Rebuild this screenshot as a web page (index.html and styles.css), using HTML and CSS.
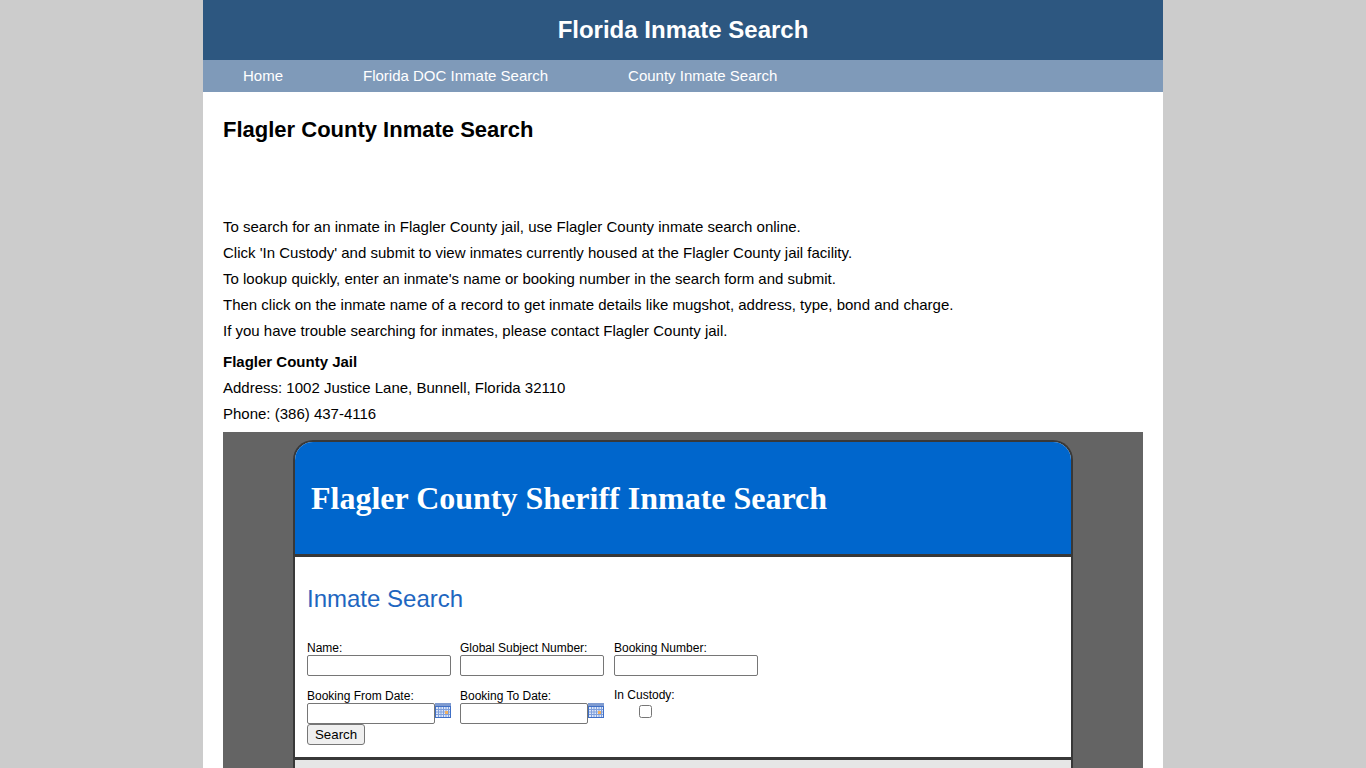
FILE: index.html
```html
<!DOCTYPE html>
<html lang="en">

<head>
    <meta charset="UTF-8" />
    <title>Flagler County Inmate Search</title>
    <link rel="stylesheet" href="styles.css">
</head>

<body>
    <div class="wrapper">
        <header class="site-title">Florida Inmate Search</header>
        <nav class="site-nav">
            <a href="#">Home</a>
            <a href="#">Florida DOC Inmate Search</a>
            <a href="#">County Inmate Search</a>
        </nav>
        <div class="content">
            <h1>Flagler County Inmate Search</h1>
            <div class="intro">
                <p>To search for an inmate in Flagler County jail, use Flagler County inmate search online.</p>
                <p>Click 'In Custody' and submit to view inmates currently housed at the Flagler County jail facility.</p>
                <p>To lookup quickly, enter an inmate's name or booking number in the search form and submit.</p>
                <p>Then click on the inmate name of a record to get inmate details like mugshot, address, type, bond and charge.</p>
                <p>If you have trouble searching for inmates, please contact Flagler County jail.</p>
            </div>
            <div class="jail-info">
                <p><b>Flagler County Jail</b></p>
                <p>Address: 1002 Justice Lane, Bunnell, Florida 32110</p>
                <p>Phone: (386) 437-4116</p>
            </div>
            <div class="frame">
                <div class="card">
                    <div class="card-head">Flagler County Sheriff Inmate Search</div>
                    <div class="card-body">
                        <h2>Inmate Search</h2>
                        <form class="search-form">
                            <div class="form-row">
                                <label class="field">Name:<input type="text" class="box"></label>
                                <label class="field">Global Subject Number:<input type="text" class="box"></label>
                                <label class="field">Booking Number:<input type="text" class="box"></label>
                            </div>
                            <div class="form-row">
                                <label class="field">Booking From Date:
                                    <span class="date-line">
                                        <input type="text" class="box box-date">
                                        <svg class="cal" viewBox="0 0 16 15"><use href="#cal-icon" /></svg>
                                    </span>
                                </label>
                                <label class="field">Booking To Date:
                                    <span class="date-line">
                                        <input type="text" class="box box-date">
                                        <svg class="cal" viewBox="0 0 16 15"><use href="#cal-icon" /></svg>
                                    </span>
                                </label>
                                <label class="field field-check">In Custody:<input type="checkbox" class="check"></label>
                            </div>
                            <button type="button" class="search-btn">Search</button>
                        </form>
                    </div>
                    <div class="card-foot"></div>
                </div>
            </div>
        </div>
    </div>

    <svg class="defs" width="0" height="0">
        <defs>
            <g id="cal-icon">
                <rect x="0" y="0" width="16" height="15" fill="#3f6fc6" />
                <rect x="0" y="0" width="16" height="3" fill="#7f9bd0" />
                <rect x="1" y="4" width="14" height="10" fill="#dfe8f8" />
                <path d="M1 6.5h14M1 9h14M1 11.5h14M3.5 4v10M6 4v10M8.5 4v10M11 4v10M13.5 4v10" stroke="#7f9fdc" stroke-width="1" />
                <rect x="10" y="8" width="3" height="3" fill="#f0b060" />
            </g>
        </defs>
    </svg>
</body>

</html>
```

FILE: styles.css
```css
:root {
    --page-bg: #cccccc;
    --title-bg: #2d5780;
    --nav-bg: #7f9ab9;
    --frame-bg: #646464;
    --card-line: #383838;
    --card-blue: #0066cc;
}

html,
body {
    margin: 0;
    padding: 0;
    height: 768px;
    overflow: hidden;
}

body {
    background-color: var(--page-bg);
    font-family: "Liberation Sans", Arial, sans-serif;
    color: #000;
}

.wrapper {
    width: 960px;
    margin-left: 203px;
    background: #fff;
}

.site-title {
    height: 60px;
    line-height: 60px;
    background-color: var(--title-bg);
    color: #fff;
    font-size: 24px;
    font-weight: bold;
    text-align: center;
}

.site-nav {
    height: 30px;
    display: flex;
    gap: 80px;
    padding: 0 0 2px 40px;
    align-items: center;
    background-color: var(--nav-bg);
}

.site-nav a {
    color: #fff;
    font-size: 15px;
    text-decoration: none;
}

.content {
    padding: 0 20px;
}

h1 {
    margin: 0;
    padding-top: 24px;
    height: 122px;
    box-sizing: border-box;
    font-size: 22px;
    line-height: 27px;
}

.content p {
    margin: 0;
    font-size: 15px;
    line-height: 26px;
    height: 26px;
}

.intro {
    margin-bottom: 5px;
}

.jail-info {
    margin-bottom: 5px;
}

.frame {
    background-color: var(--frame-bg);
    padding: 8px 70px 0;
}

.card {
    border: 2px solid var(--card-line);
    border-bottom: none;
    border-radius: 20px 20px 0 0;
    background: #fff;
    overflow: hidden;
}

.card-head {
    height: 112px;
    line-height: 113px;
    padding-left: 16px;
    background-color: var(--card-blue);
    color: #fff;
    font-family: "Liberation Serif", "Times New Roman", serif;
    font-size: 32px;
    font-weight: bold;
    border-bottom: 3px solid var(--card-line);
}

.card-body {
    padding: 0 12px 12px;
}

h2 {
    margin: 0;
    padding-top: 28px;
    height: 83px;
    box-sizing: border-box;
    font-size: 24px;
    font-weight: normal;
    line-height: 28px;
    color: #1e66c0;
}

.form-row {
    display: grid;
    grid-template-columns: 153px 154px 144px;
    margin-bottom: 12px;
}

.form-row:nth-child(2) {
    margin-bottom: 0;
}

.field {
    display: flex;
    flex-direction: column;
    font-size: 12px;
    line-height: 16px;
}

.box {
    width: 144px;
    height: 21px;
    margin: -1px 0 0;
    padding: 0 2px;
    box-sizing: border-box;
    border: 1px solid #767676;
    border-radius: 2px;
    background: #fff;
}

.date-line {
    display: flex;
    align-items: flex-start;
}

.box-date {
    width: 128px;
}

.cal {
    width: 16px;
    height: 15px;
    margin-top: -1px;
}

.check {
    width: 13px;
    height: 13px;
    margin: 2px 0 0 25px;
}

.field-check {
    margin-top: -1px;
}

.search-btn {
    display: block;
    height: 21px;
    padding: 0 7px;
    border: 1px solid #767676;
    border-radius: 3px;
    background-color: #efefef;
    font-family: "Liberation Sans", Arial, sans-serif;
    font-size: 13.3px;
    color: #000;
}

.card-foot {
    height: 8px;
    border-top: 3px solid var(--card-line);
    background: #e6e6e6;
}

.defs {
    position: absolute;
}
```
